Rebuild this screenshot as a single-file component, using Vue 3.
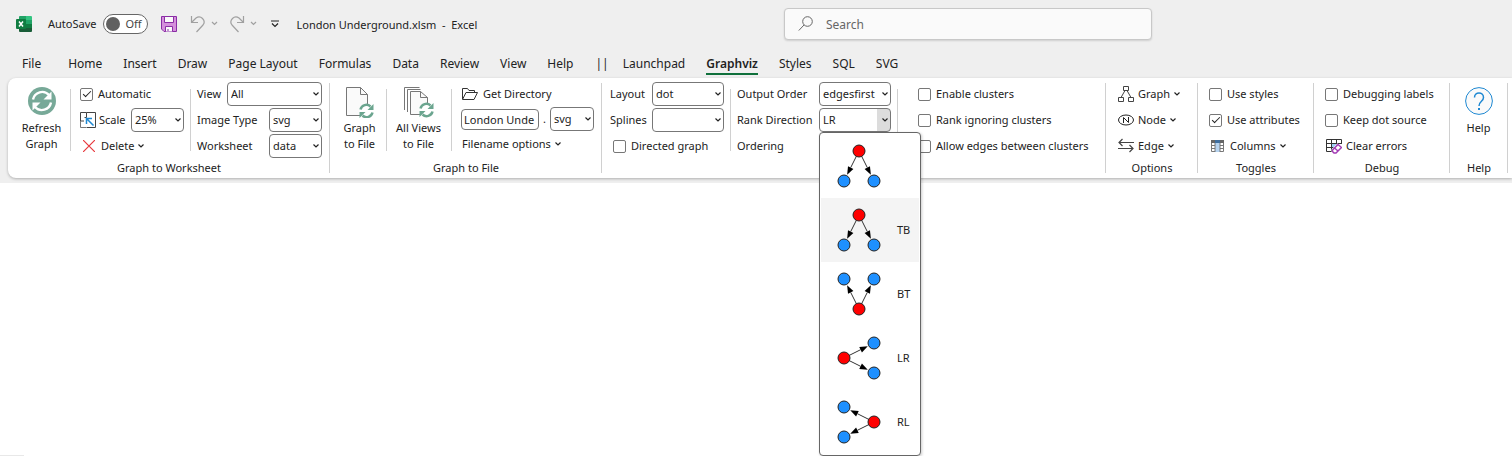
<script setup>
import { ref } from 'vue'

const tabs = ['File', 'Home', 'Insert', 'Draw', 'Page Layout', 'Formulas', 'Data', 'Review', 'View', 'Help', '||', 'Launchpad', 'Graphviz', 'Styles', 'SQL', 'SVG']
const activeTab = ref('Graphviz')
const fileName = ref('London Unde')

const top = { c: [39, 17], n: [[24, 47], [54, 47]] }
const directions = [
  { label: '', root: top.c, leaves: top.n },
  { label: 'TB', root: top.c, leaves: top.n },
  { label: 'BT', root: [39, 47], leaves: [[24, 17], [54, 17]] },
  { label: 'LR', root: [24, 32], leaves: [[54, 17], [54, 47]] },
  { label: 'RL', root: [54, 32], leaves: [[24, 17], [24, 47]] },
]
const hovered = ref(1)

function arrow([x1, y1], [x2, y2]) {
  const d = Math.hypot(x2 - x1, y2 - y1)
  const ux = (x2 - x1) / d
  const uy = (y2 - y1) / d
  const tx = x2 - ux * 7
  const ty = y2 - uy * 7
  const bx = tx - ux * 8
  const by = ty - uy * 8
  return {
    line: `M${x1} ${y1}L${bx} ${by}`,
    head: `M${tx} ${ty}L${bx - uy * 3} ${by + ux * 3}L${bx + uy * 3} ${by - ux * 3}Z`,
  }
}
</script>

<template>
  <div class="app">
    <header class="titlebar">
      <div class="quick">
        <svg class="logo" width="16" height="16" viewBox="0 0 16 16">
          <path d="M4 0h6v4H3V1a1 1 0 0 1 1-1z" fill="#21a366" />
          <path d="M10 0h5a1 1 0 0 1 1 1v3h-6z" fill="#33c481" />
          <path d="M3 4h7v4H3z" fill="#107c41" /><path d="M10 4h6v4h-6z" fill="#21a366" />
          <path d="M3 8h7v4H3z" fill="#185c37" /><path d="M10 8h6v4h-6z" fill="#107c41" />
          <path d="M3 12h13v3a1 1 0 0 1-1 1H4a1 1 0 0 1-1-1z" fill="#185c37" />
          <rect y="3" width="10" height="10" rx="1" fill="#107c41" />
          <path d="M3 5.500l4 5M7 5.500l-4 5" stroke="#fff" stroke-width="1.500" />
        </svg>
        <label class="autosave" for="autosave">AutoSave</label>
        <button id="autosave" class="toggle" type="button" role="switch" aria-checked="false"><i class="knob"></i>Off</button>
        <button class="plain save" type="button" aria-label="Save">
          <svg width="16" height="16" viewBox="0 0 16 16">
            <path d="M.5.5h15v15H3L.5 13z" fill="#d48fdb" stroke="#8a2da5" />
            <path d="M3.500.5h9v6h-9z" fill="#fafafa" stroke="#8a2da5" />
            <path d="M4.500 15.500v-5h7v5" fill="#fafafa" stroke="#8a2da5" /><path d="M7 13v2" stroke="#8a2da5" />
          </svg>
        </button>
        <button class="plain undo" type="button" aria-label="Undo">
          <svg width="28" height="18" viewBox="0 0 28 18" fill="none" stroke="#a0a0a0" stroke-width="1.200">
            <path d="M1.500 1v6.500H8M1.500 7.500l4.500-4.500a5 5 0 0 1 7 7L6.500 17" /><path d="M22 7l2.500 2.500L27 7" />
          </svg>
        </button>
        <button class="plain redo" type="button" aria-label="Redo">
          <svg width="28" height="18" viewBox="0 0 28 18" fill="none" stroke="#a0a0a0" stroke-width="1.200">
            <path d="M14.500 1v6.500H8M14.500 7.500L10 3a5 5 0 0 0-7 7l6.500 7" /><path d="M22 7l2.500 2.500L27 7" />
          </svg>
        </button>
        <button class="plain more" type="button" aria-label="Customize toolbar">
          <svg width="8" height="8" viewBox="0 0 8 8" fill="none" stroke="#222" stroke-width="1.200"><path d="M0 1h8M1 3.500l3 3 3-3" /></svg>
        </button>
        <span class="doc">London Underground.xlsm&nbsp; -&nbsp; Excel</span>
      </div>
      <label class="search">
        <svg width="16" height="16" viewBox="0 0 16 16" fill="none" stroke="#666"><circle cx="9.500" cy="5.500" r="4.800" /><path d="M6 9L.8 14.500" /></svg>
        <input type="search" placeholder="Search" aria-label="Search" />
      </label>
    </header>

    <nav class="tabs">
      <button v-for="t in tabs" :key="t" type="button" class="tab" :class="{ active: t === activeTab, first: t === 'File', bars: t === '||' }" @click="activeTab = t"><span>{{ t }}</span></button>
    </nav>

    <main class="ribbon">
      <section class="group g-worksheet">
        <div class="cols">
          <button class="big refresh" type="button">
            <svg width="28" height="28" viewBox="0 0 28 28">
              <circle cx="14" cy="14" r="14" fill="#77a998" />
              <g fill="none" stroke="#fff" stroke-width="2.400"><path d="M5 12.500a9.300 9.300 0 0 1 16-4.500M23 15.500a9.300 9.300 0 0 1-16 4.500" /></g>
              <path d="M23.500 4.500v8h-8zM4.500 23.500v-8h8z" fill="#fff" />
            </svg>
            <span>Refresh<br />Graph</span>
          </button>
          <div class="col c-scale">
            <label class="row check"><input type="checkbox" checked />Automatic</label>
            <div class="row scale">
              <svg width="16" height="16" viewBox="0 0 16 16" fill="none"><path d="M6.500 15.500h9V.5h-9M.5 9V.5h6v5h-2M.5 9h3.500" stroke="#444" /><path d="M.5 9v6.500H6" stroke="#777" /><path d="M13.500 13.500L7 7M6.500 12V6.500H12" stroke="#1e88d2" stroke-width="1.500" /></svg>
              <label for="scale">Scale</label>
              <span class="combo w53"><select id="scale"><option>25%</option></select><svg class="chev" viewBox="0 0 6 4"><path d="M.5.5L3 3 5.500.5" /></svg></span>
            </div>
            <button class="row plain delete" type="button">
              <svg width="12" height="12" viewBox="0 0 12 12" stroke="#e8383d" stroke-width="1.200"><path d="M0 0l12 12M12 0L0 12" /></svg>
              Delete<svg class="chev" viewBox="0 0 6 4"><path d="M.5.5L3 3 5.500.5" /></svg>
            </button>
          </div>
          <div class="col c-view">
            <div class="row between"><label for="view">View</label><span class="combo w95"><select id="view"><option>All</option></select><svg class="chev" viewBox="0 0 6 4"><path d="M.5.5L3 3 5.500.5" /></svg></span></div>
            <div class="row between"><label for="imgtype">Image Type</label><span class="combo w53"><select id="imgtype"><option>svg</option></select><svg class="chev" viewBox="0 0 6 4"><path d="M.5.5L3 3 5.500.5" /></svg></span></div>
            <div class="row between"><label for="sheet">Worksheet</label><span class="combo w53"><select id="sheet"><option>data</option></select><svg class="chev" viewBox="0 0 6 4"><path d="M.5.5L3 3 5.500.5" /></svg></span></div>
          </div>
        </div>
        <h2>Graph to Worksheet</h2>
      </section>

      <section class="group g-file">
        <div class="cols">
          <button class="big tofile" type="button">
            <svg width="28" height="31" viewBox="0 0 28 31">
              <path d="M.5.5h14l7 7v21H.5z" fill="#fafafa" stroke="#777" /><path d="M14.500.5v7h7" fill="none" stroke="#777" />
              <circle cx="20.500" cy="24" r="7" fill="#fff" />
              <g fill="none" stroke="#6ba58f" stroke-width="2.500"><path d="M14.500 22.500a6 6 0 0 1 10-3M26.500 25.500a6 6 0 0 1-10 3" /></g>
              <path d="M27.500 17v6h-6zM13.500 31v-6h6z" fill="#6ba58f" />
            </svg>
            <span>Graph<br />to File</span>
          </button>
          <button class="big toall" type="button">
            <svg width="30" height="31" viewBox="0 0 30 31">
              <path d="M.5 23V.5h15M3.500 25V2.500h13M5.500 27" fill="none" stroke="#777" />
              <path d="M6.500 4.500h10l7 6v17h-17z" fill="#fafafa" stroke="#777" /><path d="M16.500 4.500v6h7" fill="none" stroke="#777" />
              <circle cx="22.500" cy="23" r="7" fill="#fff" />
              <g fill="none" stroke="#6ba58f" stroke-width="2.500"><path d="M16.500 21.500a6 6 0 0 1 10-3M28.500 24.500a6 6 0 0 1-10 3" /></g>
              <path d="M29.500 16v6h-6zM15.500 30v-6h6z" fill="#6ba58f" />
            </svg>
            <span>All Views<br />to File</span>
          </button>
          <div class="col c-dir">
            <button class="row plain dir" type="button">
              <svg width="16" height="12" viewBox="0 0 16 12" fill="none" stroke="#333"><path d="M.5 11V.5h5l1.500 2h5.500V4.500M.5 11.500L4 4.500h11.500l-3.500 7z" /></svg>
              Get Directory
            </button>
            <div class="row named">
              <input v-model="fileName" class="fname" type="text" aria-label="File name" /><span>.</span>
              <span class="combo w44"><select aria-label="File extension"><option>svg</option></select><svg class="chev" viewBox="0 0 6 4"><path d="M.5.5L3 3 5.500.5" /></svg></span>
            </div>
            <button class="row plain options" type="button">Filename options<svg class="chev" viewBox="0 0 6 4"><path d="M.5.5L3 3 5.500.5" /></svg></button>
          </div>
        </div>
        <h2>Graph to File</h2>
      </section>

      <section class="group g-layout">
        <div class="cols">
          <div class="col c-layout">
            <div class="row between"><label for="layout">Layout</label><span class="combo w72"><select id="layout"><option>dot</option></select><svg class="chev" viewBox="0 0 6 4"><path d="M.5.5L3 3 5.500.5" /></svg></span></div>
            <div class="row between"><label for="splines">Splines</label><span class="combo w72"><select id="splines"><option></option></select><svg class="chev" viewBox="0 0 6 4"><path d="M.5.5L3 3 5.500.5" /></svg></span></div>
            <label class="row check indent"><input type="checkbox" />Directed graph</label>
          </div>
          <div class="col c-order">
            <div class="row between"><label for="order">Output Order</label><span class="combo w72"><select id="order"><option>edgesfirst</option></select><svg class="chev" viewBox="0 0 6 4"><path d="M.5.5L3 3 5.500.5" /></svg></span></div>
            <div class="row between">
              <label for="rank">Rank Direction</label>
              <span class="combo w72 open">
                <select id="rank"><option>LR</option></select><svg class="chev" viewBox="0 0 6 4"><path d="M.5.5L3 3 5.500.5" /></svg>
                <span class="menu" role="listbox" aria-label="Rank Direction">
                  <button v-for="(d, i) in directions" :key="i" type="button" role="option" :aria-label="d.label || 'Default'" :aria-selected="d.label === 'LR'" :class="{ hot: i === hovered }" @mouseenter="hovered = i">
                    <svg width="72" height="64" viewBox="0 0 72 64">
                      <g v-for="(n, k) in d.leaves" :key="k">
                        <path :d="arrow(d.root, n).line" stroke="#333" />
                        <path :d="arrow(d.root, n).head" fill="#000" />
                        <circle :cx="n[0]" :cy="n[1]" r="6" fill="#1e90ff" stroke="#222" />
                      </g>
                      <circle :cx="d.root[0]" :cy="d.root[1]" r="6" fill="#f00" stroke="#222" />
                    </svg>
                    <span>{{ d.label }}</span>
                  </button>
                </span>
              </span>
            </div>
            <div class="row">Ordering</div>
          </div>
          <div class="col c-clusters">
            <label class="row check"><input type="checkbox" />Enable clusters</label>
            <label class="row check"><input type="checkbox" />Rank ignoring clusters</label>
            <label class="row check"><input type="checkbox" />Allow edges between clusters</label>
          </div>
        </div>
      </section>

      <section class="group g-options">
        <div class="cols">
          <div class="col">
            <button class="row plain opt" type="button">
              <svg width="16" height="16" viewBox="0 0 16 16" fill="none" stroke="#444"><path d="M5.500.5h5v4h-5zM.5 11.500h5v4h-5zM10.500 11.500h5v4h-5zM7 4.500L3 11.500M9 4.500l4 7" /></svg>
              Graph<svg class="chev" viewBox="0 0 6 4"><path d="M.5.5L3 3 5.500.5" /></svg>
            </button>
            <button class="row plain opt" type="button">
              <svg width="16" height="16" viewBox="0 0 16 16" fill="none" stroke="#222"><ellipse cx="8" cy="8" rx="7.500" ry="5" /><path d="M5.500 11V5.500l5 5V5" /></svg>
              Node<svg class="chev" viewBox="0 0 6 4"><path d="M.5.5L3 3 5.500.5" /></svg>
            </button>
            <button class="row plain opt" type="button">
              <svg width="16" height="16" viewBox="0 0 16 16" fill="none" stroke="#444" stroke-width="1.200"><path d="M16 4.500H1M4.500 1L1 4.500 4.500 8M0 10.500h15M11.500 7l3.500 3.500-3.500 3.500" /></svg>
              Edge<svg class="chev" viewBox="0 0 6 4"><path d="M.5.5L3 3 5.500.5" /></svg>
            </button>
          </div>
        </div>
        <h2>Options</h2>
      </section>

      <section class="group g-toggles">
        <div class="cols">
          <div class="col">
            <label class="row check"><input type="checkbox" />Use styles</label>
            <label class="row check"><input type="checkbox" checked />Use attributes</label>
            <button class="row plain columns" type="button">
              <svg width="13" height="12" viewBox="0 0 13 12"><path d="M.5.5h12v11H.5z" fill="#fff" stroke="#777" /><path d="M0 0h13v3H0z" fill="#666" /><path d="M0 5.500h13M0 8.500h13" stroke="#777" /><path d="M4 0h5v12H4z" fill="#b5d3f0" /><path d="M4 0h5v3H4z" fill="#3f6f9f" /><path d="M4 3v9M9 3v9" stroke="#777" /></svg>
              Columns<svg class="chev" viewBox="0 0 6 4"><path d="M.5.5L3 3 5.500.5" /></svg>
            </button>
          </div>
        </div>
        <h2>Toggles</h2>
      </section>

      <section class="group g-debug">
        <div class="cols">
          <div class="col">
            <label class="row check"><input type="checkbox" />Debugging labels</label>
            <label class="row check"><input type="checkbox" />Keep dot source</label>
            <button class="row plain clear" type="button">
              <svg width="16" height="16" viewBox="0 0 16 16" fill="none"><path d="M5 5h6v4l-4 4H5z" fill="#9fd0f5" /><path d="M7 13.500H.5V1.500h15V6M.5 5.500h15M.5 9.500H9M5.500 1.500v12M10.500 1.500V7" stroke="#333" /><path d="M11.500 5.800l4 3.700-5.500 5.700H7.500L6 13.500v-2z" fill="#fff" stroke="#fff" /><path d="M12 6.500l3.500 3-5.500 5.500H8l-1.500-1.500V12zM8.500 10l3.500 3" stroke="#a33ab5" stroke-width="1.500" /></svg>
              Clear errors
            </button>
          </div>
        </div>
        <h2>Debug</h2>
      </section>

      <section class="group g-help">
        <div class="cols">
          <button class="big help" type="button">
            <svg width="28" height="28" viewBox="0 0 28 28" fill="none" stroke="#1e88d2"><circle cx="14" cy="14" r="13.400" fill="#fafafa" /><path d="M9.500 10.500c0-6 9-6 9 0 0 4-4.500 3.500-4.500 8.500" stroke-width="1.500" /><path d="M14 21v2" stroke-width="2" /></svg>
            <span>Help</span>
          </button>
        </div>
        <h2>Help</h2>
      </section>
    </main>

    <div class="sheet"></div>
  </div>
</template>

<style>
body { margin: 0; background: #fff; }
</style>

<style scoped>
.app { min-height: 100vh; display: flex; flex-direction: column; position: relative; z-index: 0; color: #222; font: 12px/16px "Noto Sans", "Open Sans", sans-serif; overflow: hidden; }
button, input, select { font: inherit; color: inherit; }
svg { flex: none; display: block; }
.plain, .big, .tab { border: 0; background: none; padding: 0; margin: 0; text-align: left; white-space: nowrap; }

.titlebar { background: #efefef; height: 48px; display: grid; grid-template-columns: 784px minmax(0, 368px); align-items: center; }
.quick { display: flex; align-items: center; padding-left: 16px; white-space: nowrap; font-size: 11px; }
.autosave { margin-left: 16px; }
.toggle { display: flex; align-items: center; gap: 5px; width: 45px; height: 20px; margin-left: 7px; padding: 0 3px 0 2px; border: 1px solid #666; border-radius: 10px; background: #fff; color: #444; }
.knob { flex: none; width: 14px; height: 14px; border-radius: 50%; background: #606060; }
.save { margin-left: 13px; }
.undo { margin-left: 13px; }
.redo { margin-left: 11px; }
.more { margin-left: 14px; }
.doc { margin-left: 17px; padding-top: 1px; }
.search { display: flex; align-items: center; gap: 12px; height: 30px; padding: 0 13px; border: 1px solid #c8c8c8; border-radius: 4px; background: #fafafa; box-shadow: 0 1px 2px #0002; }
.search input { flex: 1; min-width: 0; border: 0; padding: 1px 0 0; background: none; outline: 0; }
.search input::placeholder { color: #666; opacity: 1; }

.tabs { background: #efefef; height: 30px; display: flex; padding-left: 11px; }
.tab { padding: 0 10px 0 11px; display: flex; align-items: center; }
.tab span { border-bottom: 2px solid transparent; padding-top: 4px; line-height: 18px; }
.first { margin-right: 6px; }
.bars { padding: 0 3px 0 12px; }
.active { font-weight: 600; }
.active span { border-color: #0f703b; }

.ribbon { display: flex; background: #fff; height: 100px; margin-left: 8px; border-radius: 8px 0 0 8px; box-shadow: 0 1px 3px #0004; position: relative; font-size: 11px; }
.ribbon::before { content: ""; position: absolute; inset: 0 0 -5px -8px; background: #efefef; z-index: -2; }
.group { flex: none; box-sizing: border-box; padding-top: 3px; position: relative; display: flex; flex-direction: column; }
.group::after { content: ""; position: absolute; right: 0; top: 5px; bottom: 5px; width: 1px; background: #d0d0d0; }
.cols { display: flex; height: 78px; }
h2 { margin: 0; font: inherit; line-height: 18px; text-align: center; }
.g-worksheet { width: 322px; }
.g-file { width: 272px; }
.g-layout { width: 504px; }
.g-options { width: 92px; }
.g-toggles { width: 116px; }
.g-debug { width: 136px; }
.g-help { width: 58px; }

.col { display: flex; flex-direction: column; white-space: nowrap; }
.row { height: 26px; display: flex; align-items: center; }
.between { justify-content: space-between; }
.big { display: flex; flex-direction: column; align-items: center; text-align: center; padding-top: 6px; }
.big span { margin-top: 5px; }
.tofile span, .toall span { margin-top: 2px; }
.refresh { width: 62px; padding-left: 5px; }
.tofile { width: 56px; padding-left: 3px; }
.toall { width: 65px; }
.help { width: 57px; }
.cols > * + * { position: relative; }
.cols > * + *::before { content: ""; position: absolute; left: 0; top: 8px; bottom: 8px; width: 1px; background: #d0d0d0; }
.c-scale { width: 120px; box-sizing: border-box; padding: 0 6px 0 10px; }
.c-view { width: 132px; box-sizing: border-box; padding-left: 7px; }
.c-dir { padding-left: 10px; }
.c-layout { width: 128px; box-sizing: border-box; padding: 0 6px 0 8px; }
.c-order { width: 167px; box-sizing: border-box; padding: 0 6px 0 7px; }
.c-clusters { padding-left: 21px; }
.g-options .col { padding-left: 12px; }
.g-toggles .col, .g-debug .col { padding-left: 11px; }
.indent { padding-left: 3px; }

.check input { appearance: none; box-sizing: border-box; width: 13px; height: 13px; margin: 0 5px 0 0; border: 1px solid #777; border-radius: 2px; background: #fff; display: grid; place-items: center; }
.check input:checked::before { content: ""; width: 7px; height: 3px; border: solid #222; border-width: 0 0 1px 1px; transform: translateY(-1px) rotate(-45deg); }
.scale label { margin: 0 auto 0 3px; }
.delete { padding-left: 3px; }
.delete > svg:first-child { margin-right: 6px; }
.dir > svg { margin: 0 5px 0 1px; }
.opt > svg:first-child { margin-right: 4px; }
.options { padding-left: 1px; }
.columns { padding-left: 2px; }
.columns > svg:first-child { margin-right: 6px; }
.clear > svg { margin: 0 4px 0 1px; }

.chev { width: 6px; height: 4px; fill: none; stroke: #222; stroke-width: 1.2; margin-left: 4px; }
.combo { position: relative; display: block; height: 24px; }
.combo select { appearance: none; box-sizing: border-box; display: block; width: 100%; height: 24px; padding: 0 14px 0 3px; border: 1px solid #777; border-radius: 4px; background: #fff; overflow: hidden; white-space: nowrap; }
.combo > .chev { position: absolute; right: 3px; top: 10px; pointer-events: none; }
.w44 { width: 44px; }
.w53 { width: 53px; }
.w72 { width: 72px; }
.w95 { width: 95px; }
.open select { background: linear-gradient(to left, #dcdcdc 13px, #fff 13px); }
.named { height: 24px; }
.named span:not(.combo) { width: 11px; text-align: center; }
.fname { box-sizing: border-box; width: 78px; height: 21px; padding: 0 2px; border: 1px solid #777; border-radius: 4px; background: #fff; }

.menu { position: absolute; z-index: 5; left: 0; top: 24px; width: 100px; padding: 1px 0; border: 1px solid #666; border-radius: 4px; background: #fff; box-shadow: 1px 1px 3px #0003; }
.menu button { display: flex; align-items: center; width: 98px; height: 64px; margin: 0 1px; padding: 0; border: 0; background: #fff; }
.menu button.hot { background: #f4f4f4; }
.menu svg { margin-left: -1px; }
.menu button span { margin-left: 5px; }
.sheet { flex: 1; margin-top: 5px; display: flex; align-items: flex-end; }
.sheet::after { content: ""; width: 24px; height: 1px; background: #e8e8e8; }
</style>
